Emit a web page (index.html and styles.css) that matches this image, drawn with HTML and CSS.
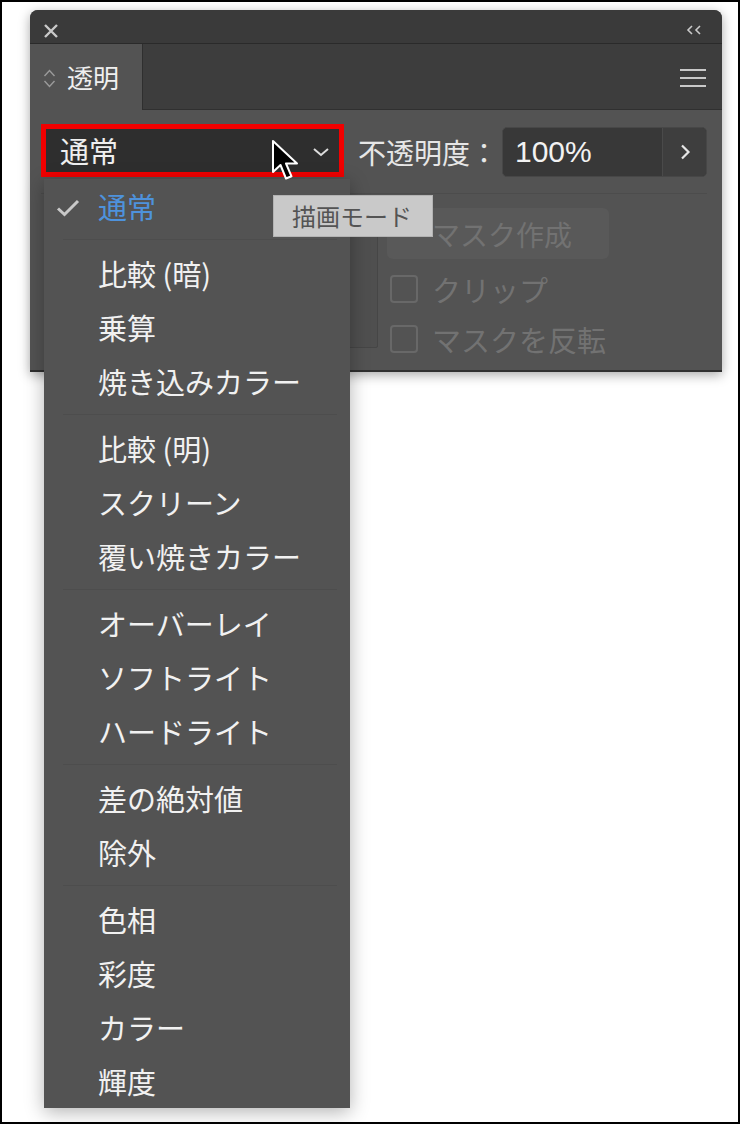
FILE: index.html
```html
<!DOCTYPE html>
<html lang="ja">
<head>
<meta charset="utf-8">
<title>透明</title>
<link rel="stylesheet" href="styles.css">
</head>
<body>
<div class="frame">
  <div class="panel">
    <div class="titlebar">
      <svg class="close" width="16" height="16" viewBox="0 0 16 16"><path d="M2 2L14 14M14 2L2 14"/></svg>
      <svg class="collapse" width="17" height="10" viewBox="0 0 17 10"><path d="M6 1L2 5L6 9M14 1L10 5L14 9"/></svg>
    </div>
    <div class="tabrow">
      <div class="tab">
        <svg class="updown" width="13" height="19" viewBox="0 0 13 19"><path d="M1.5 7L6.5 1.5L11.5 7M1.5 12L6.5 17.5L11.5 12"/></svg>
        <span class="tabtitle">透明</span>
      </div>
      <div class="tabfill">
        <svg class="hamburger" width="26" height="20" viewBox="0 0 26 20"><path d="M0 2H26M0 10H26M0 18H26"/></svg>
      </div>
    </div>
    <div class="pbody">
      <div class="row1">
        <div class="select">
          <span class="selval">通常</span>
          <svg class="selchev" width="18" height="10" viewBox="0 0 18 10"><path d="M2 2L9 8L16 2"/></svg>
        </div>
        <div class="oplabel">不透明度：</div>
        <div class="opinput">
          <span class="val">100%</span>
          <span class="step"><svg width="12" height="16" viewBox="0 0 12 16"><path d="M3 1.5L9.5 8L3 14.5"/></svg></span>
        </div>
      </div>
      <div class="divider"></div>
      <div class="row2">
        <div class="thumb"></div>
        <div class="maskcol">
          <div class="maskbtn">マスク作成</div>
          <div class="check"><span class="box"></span><span>クリップ</span></div>
          <div class="check"><span class="box"></span><span>マスクを反転</span></div>
        </div>
      </div>
    </div>
  </div>

  <ul class="menu">
    <li class="item selected">
      <svg class="tick" width="24" height="18" viewBox="0 0 24 18"><path d="M2 9.5L8.5 15.5L22 2"/></svg>通常
    </li>
    <li class="sep"></li>
    <li class="item">比較 (暗)</li>
    <li class="item">乗算</li>
    <li class="item">焼き込みカラー</li>
    <li class="sep"></li>
    <li class="item">比較 (明)</li>
    <li class="item">スクリーン</li>
    <li class="item">覆い焼きカラー</li>
    <li class="sep"></li>
    <li class="item">オーバーレイ</li>
    <li class="item">ソフトライト</li>
    <li class="item">ハードライト</li>
    <li class="sep"></li>
    <li class="item">差の絶対値</li>
    <li class="item">除外</li>
    <li class="sep"></li>
    <li class="item">色相</li>
    <li class="item">彩度</li>
    <li class="item">カラー</li>
    <li class="item">輝度</li>
  </ul>

  <div class="tooltip">描画モード</div>

  <svg class="cursor" width="34" height="48" viewBox="0 0 34 48"><path d="M2 2V33L9.5 26L15 39.5L20.5 37.3L15 24.5H26Z"/></svg>
</div>
</body>
</html>
```
FILE: styles.css
```css
* { box-sizing: border-box; }
html, body { margin: 0; padding: 0; background: #fff; }
body { font-family: "Noto Sans CJK JP", "Noto Sans", sans-serif; }

.frame {
  position: relative;
  width: 740px;
  height: 1124px;
  border: 2px solid #000;
  background: #fff;
  padding: 8px 0 0 28px;
  overflow: hidden;
}

.panel {
  width: 692px;
  height: 362px;
  background: #535353;
  border-radius: 8px 8px 0 0;
  box-shadow: 0 3px 12px rgba(0, 0, 0, 0.35);
  border-bottom: 2px solid #2f2f2f;
  overflow: hidden;
}

.titlebar {
  height: 34px;
  background: #3a3a3a;
  border-bottom: 1px solid #2a2a2a;
  display: flex;
  justify-content: space-between;
  align-items: flex-start;
  padding: 0 19px 0 13px;
}
.titlebar svg { fill: none; stroke: #c9c9c9; }
.close { margin-top: 13px; stroke-width: 2.4; }
.collapse { margin-top: 15px; stroke-width: 1.6; }

.tabrow { height: 66px; display: flex; }
.tab {
  width: 113px;
  background: #535353;
  border-right: 1px solid #2f2f2f;
  display: flex;
  align-items: center;
  padding-left: 13px;
  gap: 11px;
}
.updown { fill: none; stroke: #9a9a9a; stroke-width: 1.4; margin-top: 3px; }
.tabtitle { color: #efefef; font-size: 26px; line-height: 1; }
.tabfill {
  flex: 1;
  background: #3d3d3d;
  border-bottom: 1px solid #303030;
  display: flex;
  align-items: center;
  justify-content: flex-end;
  padding-right: 16px;
}
.hamburger { fill: none; stroke: #c9c9c9; stroke-width: 2.2; margin-top: 2px; }

.pbody { height: 260px; padding: 14px 15px 0 11px; }

.row1 { display: flex; align-items: center; height: 53px; }
.select {
  width: 303px;
  height: 53px;
  border: 5px solid #f20000;
  background: #2e2e2e;
  display: flex;
  align-items: center;
  justify-content: space-between;
  padding: 0 9px 0 14px;
}
.selval { color: #efefef; font-size: 29px; line-height: 1; }
.selchev { fill: none; stroke: #dcdcdc; stroke-width: 2; margin-top: 3px; }
.oplabel {
  width: 144px;
  margin-left: 14px;
  color: #e6e6e6;
  font-size: 28px;
  white-space: nowrap;
  line-height: 1;
  margin-top: 2px;
}
.opinput {
  width: 205px;
  height: 50px;
  margin-top: 3px;
  display: flex;
  background: #383838;
  border: 1px solid #474747;
  border-radius: 5px;
  overflow: hidden;
}
.val {
  flex: 1;
  padding-left: 12px;
  font-family: "Liberation Sans", Arial, sans-serif;
  font-size: 30px;
  color: #f2f2f2;
  display: flex;
  align-items: center;
}
.step {
  width: 44px;
  border-left: 1px solid #4a4a4a;
  background: #3e3e3e;
  display: flex;
  align-items: center;
  justify-content: center;
}
.step svg { fill: none; stroke: #e6e6e6; stroke-width: 2.2; }

.divider { height: 1px; background: #4c4c4c; margin-top: 16px; }

.row2 { display: flex; }
.thumb {
  width: 128px;
  height: 150px;
  margin: 4px 0 0 209px;
  background: #4f4f4f;
  border: 1px solid #464646;
  border-radius: 2px;
}
.maskcol { margin-left: 9px; padding-top: 14px; }
.maskbtn {
  width: 222px;
  height: 51px;
  background: #595959;
  border-radius: 6px;
  color: #727272;
  font-size: 28px;
  display: flex;
  align-items: center;
  justify-content: center;
  padding-left: 8px;
}
.check {
  display: flex;
  align-items: center;
  gap: 14px;
  margin: 16px 0 0 3px;
  height: 28px;
  color: #727272;
  font-size: 29px;
  line-height: 1;
}
.check + .check { margin-top: 22px; }
.box {
  width: 28px;
  height: 28px;
  border: 2px solid #686868;
  border-radius: 4px;
}

.menu {
  position: absolute;
  left: 42px;
  top: 177px;
  width: 306px;
  margin: 0;
  padding: 0;
  list-style: none;
  background: #535353;
  box-shadow: 0 4px 18px rgba(0, 0, 0, 0.3);
}
.item {
  position: relative;
  height: 54px;
  line-height: 54px;
  padding-left: 54px;
  font-size: 29px;
  color: #f1f1f1;
  white-space: nowrap;
}
.item.selected { color: #4e92dc; }
.tick {
  position: absolute;
  left: 12px;
  top: 20px;
  fill: none;
  stroke: #c9c9c9;
  stroke-width: 3;
}
.sep { height: 13px; padding: 6px 13px 0 19px; }
.sep::after { content: ""; display: block; height: 1px; background: #4d4d4d; }

.tooltip {
  position: absolute;
  left: 271px;
  top: 193px;
  width: 160px;
  height: 42px;
  background: #c9c9c9;
  border: 1px solid #b3b3b3;
  color: #545454;
  font-size: 24px;
  line-height: 40px;
  padding-left: 18px;
  white-space: nowrap;
}

.cursor {
  position: absolute;
  left: 269px;
  top: 137px;
  fill: #000;
  stroke: #fff;
  stroke-width: 2;
  stroke-linejoin: round;
}
```
